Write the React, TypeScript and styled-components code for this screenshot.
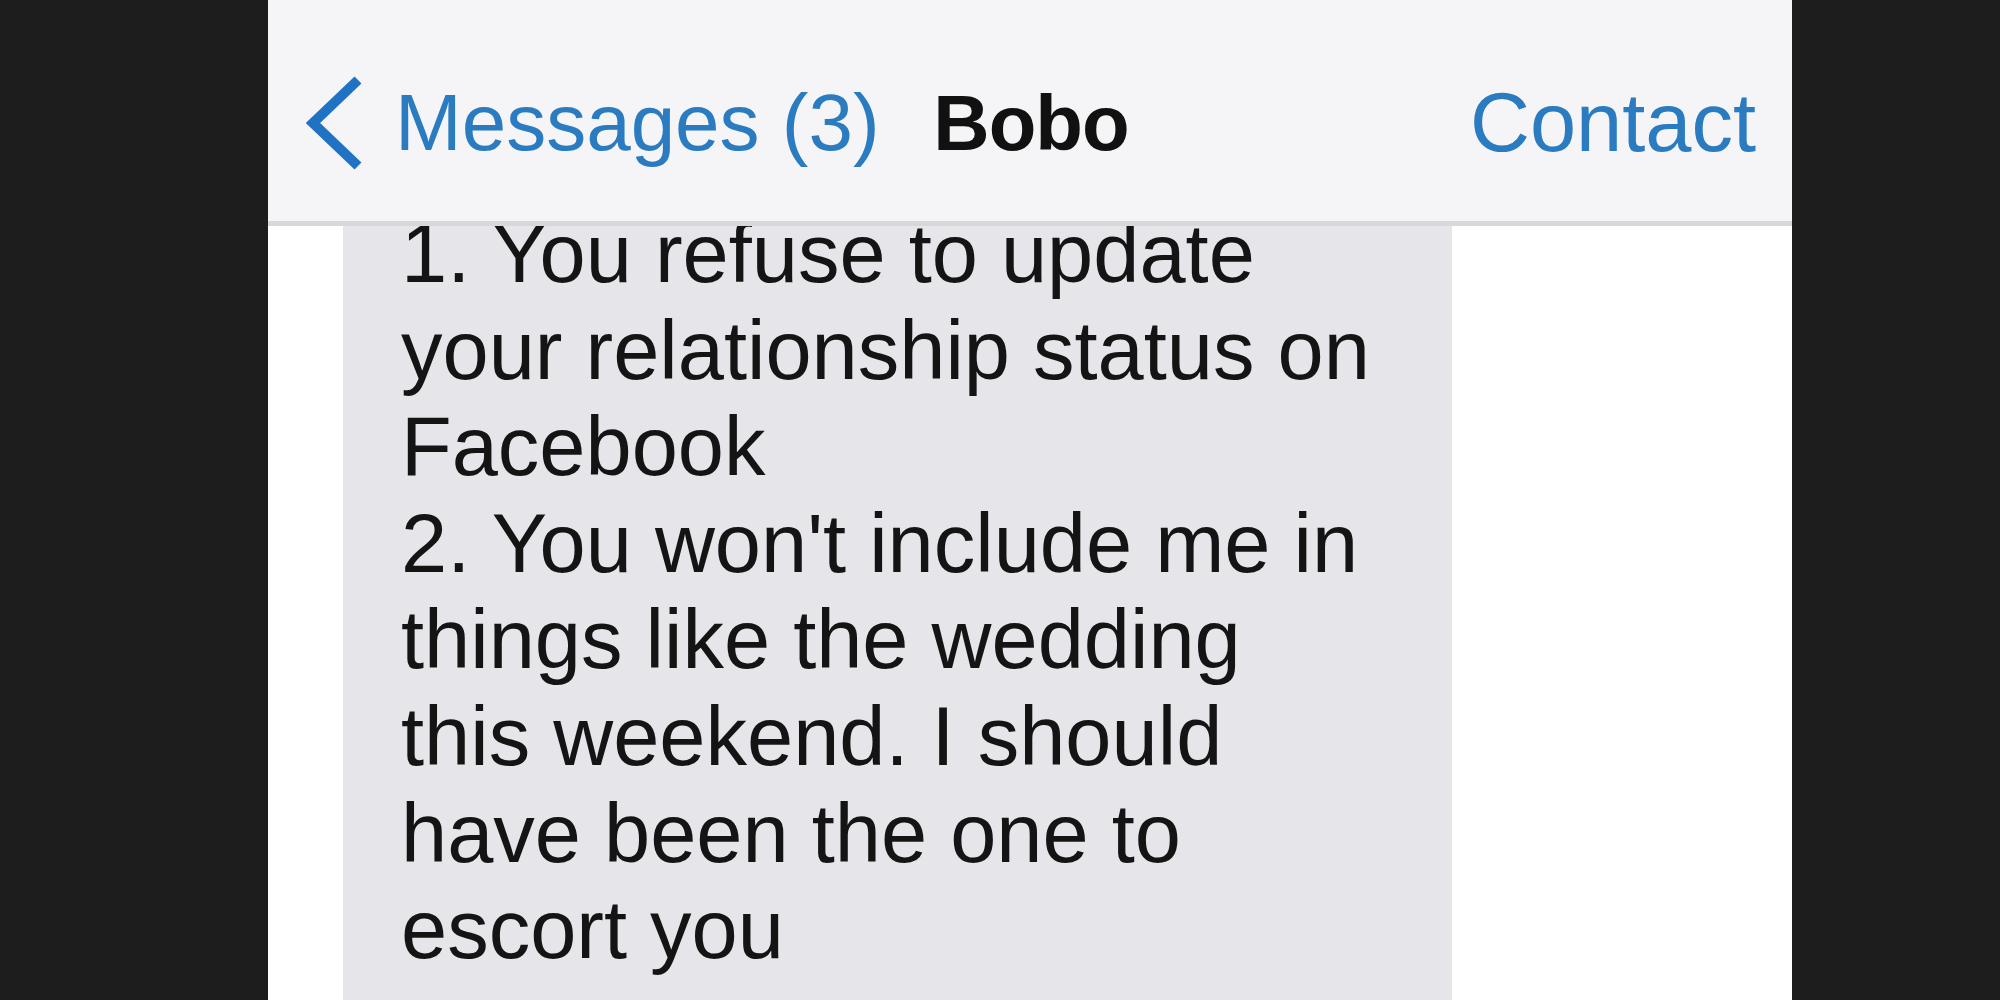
import styled, { createGlobalStyle } from 'styled-components';

const GlobalStyle = createGlobalStyle`
    html, body {
        margin: 0;
        padding: 0;
        background: #1d1d1d;
    }
`;

const Page = styled.div`
    display: flex;
    height: 1000px;
    padding-left: 268px;
    overflow: hidden;
`;

const Screen = styled.div`
    width: 1524px;
    height: 1000px;
    background: #ffffff;
    overflow: hidden;
    font-family: 'Liberation Sans', Arial, sans-serif;
`;

const NavBar = styled.div`
    position: relative;
    z-index: 1;
    box-sizing: border-box;
    display: grid;
    grid-template-columns: 1fr auto 1fr;
    align-items: center;
    height: 226px;
    padding: 24px 36px 0 38px;
    background: #f5f5f7;
    border-bottom: 5px solid #d8d8da;
`;

const BackButton = styled.div`
    display: flex;
    align-items: center;
    gap: 33px;
    color: #2a7bc0;
    font-size: 80px;
    line-height: 80px;
`;

const Title = styled.div`
    color: #111111;
    font-size: 78px;
    line-height: 80px;
    font-weight: 700;
    letter-spacing: -1px;
`;

const ActionButton = styled.div`
    justify-self: end;
    color: #2a7bc0;
    font-size: 83px;
    line-height: 80px;
`;

const Thread = styled.div`
    padding-left: 75px;
`;

const Bubble = styled.div`
    width: 1109px;
    box-sizing: border-box;
    margin-top: -20px;
    padding: 0 40px 200px 58px;
    background: #e5e5ea;
    color: #141414;
    font-size: 83px;
    line-height: 96.6px;
`;

const Line = styled.div`
    white-space: nowrap;
`;

const Chevron = () => (
    <svg width="56" height="94" viewBox="0 0 56 94">
        <polyline
            points="52,4 7,47 52,90"
            fill="none"
            stroke="#1f72c4"
            strokeWidth="10"
            strokeLinejoin="miter"
        />
    </svg>
);

const MESSAGE_LINES = [
    '1. You refuse to update',
    'your relationship status on',
    'Facebook',
    "2. You won't include me in",
    'things like the wedding',
    'this weekend. I should',
    'have been the one to',
    'escort you',
];

const App = () => {
    return (
        <>
            <GlobalStyle />
            <Page>
                <Screen>
                    <NavBar>
                        <BackButton>
                            <Chevron />
                            <span>Messages (3)</span>
                        </BackButton>
                        <Title>Bobo</Title>
                        <ActionButton>Contact</ActionButton>
                    </NavBar>

                    <Thread>
                        <Bubble>
                            {MESSAGE_LINES.map((line, key) => (
                                <Line key={key}>{line}</Line>
                            ))}
                        </Bubble>
                    </Thread>
                </Screen>
            </Page>
        </>
    );
};

export default App;
